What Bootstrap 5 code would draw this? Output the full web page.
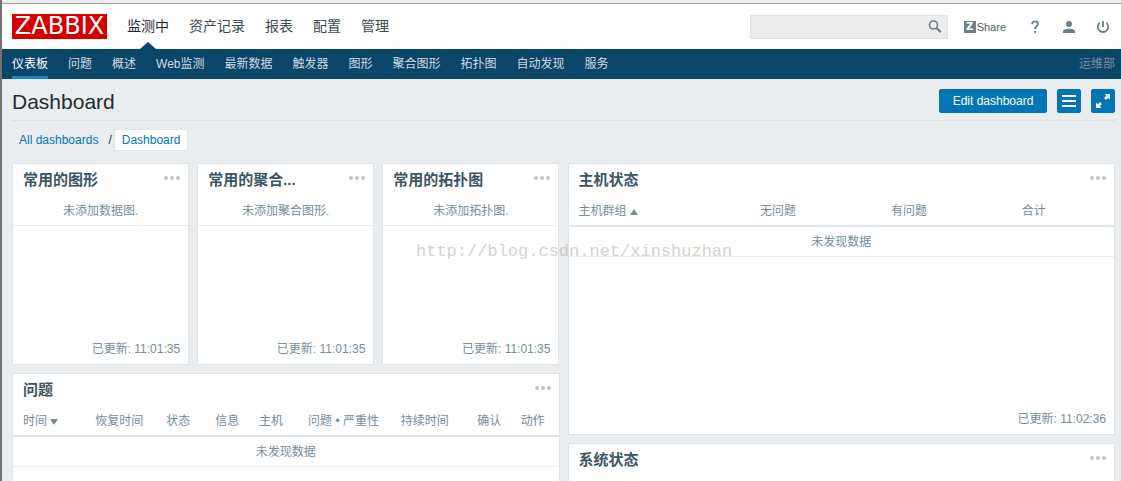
<!DOCTYPE html>
<html lang="zh-CN">
<head>
<meta charset="utf-8">
<meta name="viewport" content="width=device-width, initial-scale=1">
<title>Dashboard</title>
<link rel="stylesheet" href="https://cdn.jsdelivr.net/npm/bootstrap@5.3.0/dist/css/bootstrap.min.css">
<script src="https://cdn.jsdelivr.net/npm/bootstrap@5.3.0/dist/js/bootstrap.bundle.min.js"></script>
<style>
  body {
    font-family: "Liberation Sans", "Noto Sans CJK SC", sans-serif;
    font-size: 12px;
    line-height: 18px;
    color: #1f2c33;
    background: #e9edf0;
    border-left: 2px solid #767272;
    overflow: hidden;
    min-height: 100vh;
  }
  .window-edge { height: 4px; background: #ededed; border-bottom: 1px solid #a2a2a2; }
  .page-pad { padding-left: 10px; padding-right: 6px; }

  .top-bar { height: 45px; }
  .brand { background: #d40000; color: #fff; font: 24px/25px "DejaVu Sans", sans-serif; width: 95px; height: 25px; text-align: center; }
  .main-menu { gap: 20px; margin-left: 20px; font-size: 14px; }
  .main-menu .nav-link { padding: 0; line-height: 45px; color: #3c4a52; }
  .main-menu .nav-link.active { color: #1f2c33; position: relative; }
  .main-menu .nav-link.active::after {
    content: ""; position: absolute; bottom: 0; left: 50%; margin-left: -8px;
    border: 8px solid transparent; border-top: 0; border-bottom-color: #0a466a; border-bottom-width: 7px;
  }
  .search-box { width: 198px; height: 24px; background: #ececec; border: 1px solid #e2e2e2; margin-right: 16px; }
  .search-box input { border: 0; background: transparent; outline: 0; min-width: 0; padding: 0 6px; }
  .search-box button { width: 24px; }
  .tool { width: 24px; height: 24px; color: #6b7f8b; }
  .tool-set { gap: 10px; margin-left: 17px; }
  .share { color: #4f5d65; font-size: 11px; gap: 1px; }
  .share-z { width: 12px; height: 12px; background: #6b7f8b; color: #fff; font: bold 10px/12px "DejaVu Sans", sans-serif; text-align: center; }

  .sub-bar { height: 30px; background: #0a466a; color: #7b8f9b; }
  .sub-menu { gap: 20px; }
  .sub-menu .nav-link { padding: 0; line-height: 30px; height: 30px; color: #cfdbe2; }
  .sub-menu .nav-link.active { color: #fff; border-bottom: 3px solid #1784cb; }

  .title-bar { height: 42px; padding-top: 2px; border-bottom: 1px solid #dce1e4; margin-bottom: 8px; gap: 10px; }
  .title-bar h1 { font-size: 21px; line-height: 24px; font-weight: 400; color: #1f2c33; padding-top: 2px; }
  .btn-act { --bs-btn-color: #fff; --bs-btn-bg: #0275b8; --bs-btn-border-color: #0275b8; --bs-btn-hover-color: #fff; --bs-btn-hover-bg: #02659f;
    --bs-btn-border-radius: 2px; height: 24px; min-width: 24px; padding: 0; font-size: 12px; line-height: 22px; }
  .btn-wide { width: 108px; }
  .crumbs { height: 22px; margin-bottom: 12px; }
  .crumbs a { color: #0275b8; text-decoration: none; padding: 0 10px 0 7px; line-height: 20px; }
  .crumbs a.current { background: #fff; border: 1px solid #dfe4e7; border-radius: 2px; padding: 0 7px; margin-left: 2px; }

  .widget { border: 1px solid #dfe4e7; border-radius: 0; color: #768d99; }
  .widget-small { min-height: 202px; }
  .widget-large { min-height: 272px; }
  .widget-head { height: 31px; padding: 0 8px 0 10px; }
  .widget-head h2 { font-size: 15px; line-height: 32px; font-weight: 700; color: #3c5563; }
  .widget-head button { height: 28px; }
  .widget-foot { padding: 0 8px 6px; }
  .blank-note { padding-top: 2px; line-height: 28px; border-bottom: 1px solid #ebeef0; }
  .list { --bs-table-color: #768d99; --bs-table-bg: transparent; table-layout: fixed; }
  .list th { font-weight: 400; line-height: 28px; padding: 2px 0 0 6px; border-bottom: 2px solid #dfe4e7; white-space: nowrap; color: #768d99; }
  .list td { line-height: 27px; padding: 2px 0 0; border-bottom: 1px solid #ebeef0; text-align: center; color: #768d99; }
  .list th:first-child { padding-left: 10px; }
  .list th a { color: inherit; text-decoration: none; }
  .w8 { width: 8%; } .w9 { width: 9%; } .w13 { width: 13%; } .w14 { width: 14%; }
  .w17 { width: 17%; } .w18 { width: 18%; } .w24 { width: 24%; } .w34 { width: 34%; }

  .watermark { left: 37%; top: 241px; font: 17px/22px "Liberation Mono", monospace; color: #a8a89c; opacity: .5; pointer-events: none; }
  svg { display: block; }
  th svg { display: inline-block; }
</style>
</head>
<body class="position-relative">
<svg class="d-none">
  <symbol id="dots" viewBox="0 0 16 4"><circle cx="2" cy="2" r="2"/><circle cx="8" cy="2" r="2"/><circle cx="14" cy="2" r="2"/></symbol>
</svg>
<div class="window-edge"></div>

<header>
  <div class="top-bar page-pad bg-white d-flex align-items-center">
    <a href="#" class="brand text-decoration-none">ZABBIX</a>
    <nav class="main-menu nav flex-nowrap me-auto">
      <a class="nav-link active" href="#">监测中</a>
      <a class="nav-link" href="#">资产记录</a>
      <a class="nav-link" href="#">报表</a>
      <a class="nav-link" href="#">配置</a>
      <a class="nav-link" href="#">管理</a>
    </nav>
    <form class="search-box d-flex">
      <input type="text" class="flex-grow-1" aria-label="搜索">
      <button type="button" class="btn border-0 p-0 d-flex align-items-center justify-content-center" aria-label="搜索">
        <svg width="14" height="14" viewBox="0 0 14 14" fill="none" stroke="#6b7f8b"><circle cx="5.5" cy="5" r="4" stroke-width="1.6"/><path d="M8.5 8l4.300 4.300" stroke-width="2.200"/></svg>
      </button>
    </form>
    <a href="#" class="share d-flex align-items-center text-decoration-none"><span class="share-z">Z</span>Share</a>
    <div class="tool-set d-flex">
      <a href="#" class="tool d-flex align-items-center justify-content-center" aria-label="帮助">
        <svg width="12" height="14" viewBox="0 0 12 14" fill="none" stroke="currentColor" stroke-width="1.800"><path d="M3 4.200V4a3 2.700 0 0 1 6 0C9 6 6 6.200 6 9.300"/><path d="M6 11v2"/></svg>
      </a>
      <a href="#" class="tool d-flex align-items-center justify-content-center" aria-label="用户">
        <svg width="14" height="14" viewBox="0 0 14 14" fill="currentColor"><circle cx="7" cy="4" r="3"/><path d="M1 13v-1.500C1 9.500 4 8.700 7 8.700s6 .8 6 2.800V13z"/></svg>
      </a>
      <a href="#" class="tool d-flex align-items-center justify-content-center" aria-label="退出">
        <svg width="14" height="14" viewBox="0 0 14 14" fill="none" stroke="currentColor" stroke-width="1.800"><path d="M3.700 2.800a5.200 5.200 0 1 0 6.600 0M7 1v6"/></svg>
      </a>
    </div>
  </div>
  <div class="sub-bar page-pad d-flex justify-content-between align-items-center">
    <nav class="sub-menu nav flex-nowrap">
      <a class="nav-link active" href="#">仪表板</a>
      <a class="nav-link" href="#">问题</a>
      <a class="nav-link" href="#">概述</a>
      <a class="nav-link" href="#">Web监测</a>
      <a class="nav-link" href="#">最新数据</a>
      <a class="nav-link" href="#">触发器</a>
      <a class="nav-link" href="#">图形</a>
      <a class="nav-link" href="#">聚合图形</a>
      <a class="nav-link" href="#">拓扑图</a>
      <a class="nav-link" href="#">自动发现</a>
      <a class="nav-link" href="#">服务</a>
    </nav>
    <span>运维部</span>
  </div>
</header>

<main class="page-pad">
  <div class="title-bar d-flex align-items-center">
    <h1 class="mb-0 me-auto">Dashboard</h1>
    <button type="button" class="btn btn-act btn-wide">Edit dashboard</button>
    <button type="button" class="btn btn-act d-flex align-items-center justify-content-center" aria-label="菜单">
      <svg width="14" height="12" viewBox="0 0 14 12" fill="#fff"><path d="M0 0h14v2H0zM0 5h14v2H0zM0 10h14v2H0z"/></svg>
    </button>
    <button type="button" class="btn btn-act d-flex align-items-center justify-content-center" aria-label="全屏">
      <svg width="14" height="14" viewBox="0 0 14 14" fill="#fff"><path d="M8.500 0H14v5.500l-1.800-1.800-2.200 2.200L8.100 4l2.200-2.200zM0 8.500V14h5.500l-1.800-1.800L5.900 10 4 8.100l-2.200 2.200z"/></svg>
    </button>
  </div>
  <nav class="crumbs d-flex align-items-center" aria-label="breadcrumb">
    <a href="#">All dashboards</a><span>/</span><a href="#" class="current">Dashboard</a>
  </nav>

  <div class="row gx-2">
    <div class="col-6">
      <div class="row g-2">
        <div class="col-4">
          <section class="widget widget-small card">
            <div class="widget-head d-flex justify-content-between"><h2 class="m-0 text-nowrap">常用的图形</h2>
              <button type="button" class="btn border-0 p-0" aria-label="更多"><svg width="16" height="4" fill="#bac6cc"><use href="#dots"/></svg></button></div>
            <div class="blank-note text-center">未添加数据图.</div>
            <div class="widget-foot mt-auto text-end">已更新: 11:01:35</div>
          </section>
        </div>
        <div class="col-4">
          <section class="widget widget-small card">
            <div class="widget-head d-flex justify-content-between"><h2 class="m-0 text-nowrap">常用的聚合...</h2>
              <button type="button" class="btn border-0 p-0" aria-label="更多"><svg width="16" height="4" fill="#bac6cc"><use href="#dots"/></svg></button></div>
            <div class="blank-note text-center">未添加聚合图形.</div>
            <div class="widget-foot mt-auto text-end">已更新: 11:01:35</div>
          </section>
        </div>
        <div class="col-4">
          <section class="widget widget-small card">
            <div class="widget-head d-flex justify-content-between"><h2 class="m-0 text-nowrap">常用的拓扑图</h2>
              <button type="button" class="btn border-0 p-0" aria-label="更多"><svg width="16" height="4" fill="#bac6cc"><use href="#dots"/></svg></button></div>
            <div class="blank-note text-center">未添加拓扑图.</div>
            <div class="widget-foot mt-auto text-end">已更新: 11:01:35</div>
          </section>
        </div>
        <div class="col-12">
          <section class="widget widget-large card">
            <div class="widget-head d-flex justify-content-between"><h2 class="m-0">问题</h2>
              <button type="button" class="btn border-0 p-0" aria-label="更多"><svg width="16" height="4" fill="#bac6cc"><use href="#dots"/></svg></button></div>
            <table class="list table m-0">
              <thead><tr>
                <th class="w14"><a href="#">时间 <svg width="8" height="6" fill="currentColor"><path d="M0 0h8L4 6z"/></svg></a></th>
                <th class="w13">恢复时间</th><th class="w9">状态</th><th class="w8">信息</th><th class="w9">主机</th>
                <th class="w17">问题 • 严重性</th><th class="w14">持续时间</th><th class="w8">确认</th><th class="w8">动作</th>
              </tr></thead>
              <tbody><tr><td colspan="9">未发现数据</td></tr></tbody>
            </table>
          </section>
        </div>
      </div>
    </div>
    <div class="col-6">
      <div class="row g-2">
        <div class="col-12">
          <section class="widget widget-large card">
            <div class="widget-head d-flex justify-content-between"><h2 class="m-0">主机状态</h2>
              <button type="button" class="btn border-0 p-0" aria-label="更多"><svg width="16" height="4" fill="#bac6cc"><use href="#dots"/></svg></button></div>
            <table class="list table m-0">
              <thead><tr>
                <th class="w34"><a href="#">主机群组 <svg width="8" height="6" fill="currentColor"><path d="M0 6h8L4 0z"/></svg></a></th>
                <th class="w24">无问题</th><th class="w24">有问题</th><th class="w18">合计</th>
              </tr></thead>
              <tbody><tr><td colspan="4">未发现数据</td></tr></tbody>
            </table>
            <div class="widget-foot mt-auto text-end">已更新: 11:02:36</div>
          </section>
        </div>
        <div class="col-12">
          <section class="widget widget-large card">
            <div class="widget-head d-flex justify-content-between"><h2 class="m-0">系统状态</h2>
              <button type="button" class="btn border-0 p-0" aria-label="更多"><svg width="16" height="4" fill="#bac6cc"><use href="#dots"/></svg></button></div>
          </section>
        </div>
      </div>
    </div>
  </div>
</main>
<div class="watermark position-absolute text-nowrap">http://blog.csdn.net/xinshuzhan</div>
</body>
</html>
